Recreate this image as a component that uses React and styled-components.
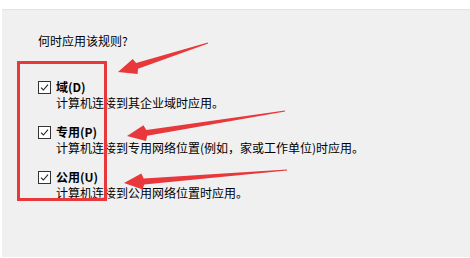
import React from "react";
import styled, { createGlobalStyle } from "styled-components";

const GlobalStyle = createGlobalStyle`
  html, body {
    margin: 0;
    padding: 0;
    background: #ffffff;
  }
  body {
    font-family: "Noto Sans CJK SC", "Microsoft YaHei", "Liberation Sans", sans-serif;
    font-size: 12px;
    color: #000;
  }
`;

const Page = styled.div`
  position: relative;
  width: 470px;
  height: 258px;
  padding-top: 9px;
  box-sizing: border-box;
  background: #ffffff;
  overflow: hidden;
`;

const Panel = styled.div`
  margin-left: 2px;
  height: 248px;
  box-sizing: border-box;
  background: #f0f0f0;
  border-top: 1px solid #e2e2e2;
  padding: 23px 0 0 36px;
`;

const Heading = styled.div`
  line-height: 16px;
  margin-bottom: 30px;
`;

const Options = styled.div`
  display: flex;
  flex-direction: column;
  gap: 13px;
`;

const Option = styled.div`
  display: grid;
  grid-template-columns: 18px auto;
  line-height: 16px;
`;

const Box = styled.span`
  width: 11px;
  height: 11px;
  margin-top: 2px;
  border: 1px solid #333;
  background: #fff;
  display: flex;
  align-items: center;
  justify-content: center;
`;

const Label = styled.div`
  font-weight: 700;
`;

const Desc = styled.div`
  grid-column: 2;
  white-space: nowrap;
`;

const Overlay = styled.svg`
  position: absolute;
  left: 0;
  top: 0;
  pointer-events: none;
`;

const RED = "#e8383c";

const Check = () => (
  <svg width="9" height="9" viewBox="0 0 9 9">
    <path d="M1 4.6 L3.4 7 L8 1.6" fill="none" stroke="#222" strokeWidth="1.1" />
  </svg>
);

const arrowPoints = (tail, tip) => {
  const dx = tip[0] - tail[0];
  const dy = tip[1] - tail[1];
  const len = Math.hypot(dx, dy);
  const ux = dx / len;
  const uy = dy / len;
  const nx = -uy;
  const ny = ux;
  const headLen = 18;
  const headW = 8;
  const shaftW = 3;
  const tailW = 0.6;
  const bx = tip[0] - ux * headLen;
  const by = tip[1] - uy * headLen;
  const nb = (k) => [bx - ux * 2 + nx * k, by - uy * 2 + ny * k];
  const pts = [
    tip,
    [bx + nx * headW, by + ny * headW],
    nb(shaftW),
    [tail[0] + nx * tailW, tail[1] + ny * tailW],
    [tail[0] - nx * tailW, tail[1] - ny * tailW],
    nb(-shaftW),
    [bx - nx * headW, by - ny * headW],
  ];
  return pts.map((p) => p.map((v) => v.toFixed(1)).join(",")).join(" ");
};

const arrows = [
  { tail: [208, 43], tip: [118, 72] },
  { tail: [285, 111], tip: [127, 136] },
  { tail: [287, 170], tip: [124, 183] },
];

const options = [
  { label: "域(D)", desc: "计算机连接到其企业域时应用。" },
  { label: "专用(P)", desc: "计算机连接到专用网络位置(例如，家或工作单位)时应用。" },
  { label: "公用(U)", desc: "计算机连接到公用网络位置时应用。" },
];

export default function App() {
  return (
    <Page>
      <GlobalStyle />
      <Panel>
        <Heading>何时应用该规则?</Heading>
        <Options>
          {options.map((o) => (
            <Option key={o.label}>
              <Box>
                <Check />
              </Box>
              <Label>{o.label}</Label>
              <Desc>{o.desc}</Desc>
            </Option>
          ))}
        </Options>
      </Panel>
      <Overlay width="470" height="258" viewBox="0 0 470 258">
        <rect x="18.5" y="62.5" width="87" height="137" fill="none" stroke={RED} strokeWidth="3" />
        {arrows.map((a, i) => (
          <polygon key={i} points={arrowPoints(a.tail, a.tip)} fill={RED} />
        ))}
      </Overlay>
    </Page>
  );
}
